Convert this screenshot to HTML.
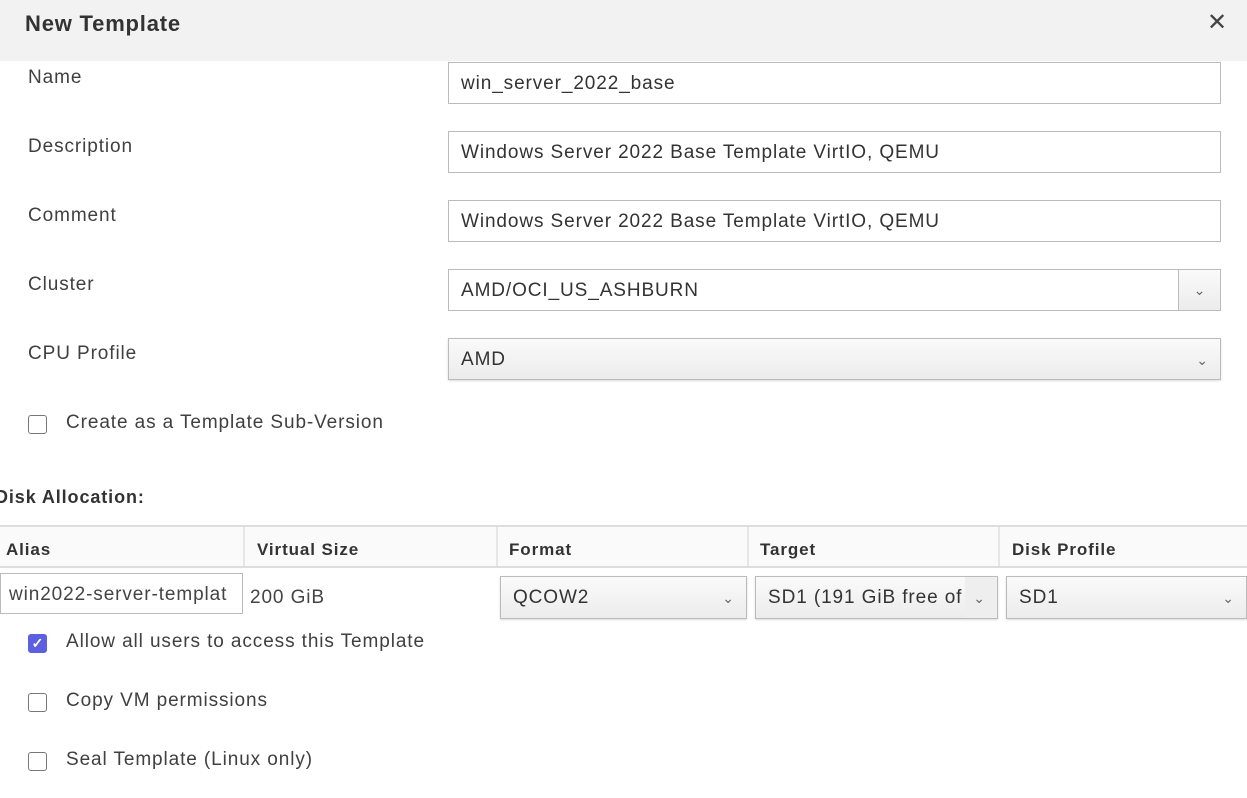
<!DOCTYPE html>
<html><head><meta charset="utf-8"><style>
*{box-sizing:border-box;margin:0;padding:0}
body{width:1247px;height:798px;background:#fff;font-family:"Liberation Sans",Arial,sans-serif;color:#363636;position:relative;overflow:hidden;font-size:19px;letter-spacing:0.9px}
.abs{position:absolute}
.hdr{left:0;top:0;width:1247px;height:61px;background:#f2f2f2}
.title{left:25px;top:11px;font-size:22px;font-weight:bold;color:#333;letter-spacing:0.8px}
.x{left:1207px;top:8px;font-size:24px;color:#444}
.lbl{left:28px;font-size:19px;color:#404040}
.inp{left:448px;width:773px;height:42px;border:1px solid #bbb;background:#fff;padding:0 12px;line-height:41px;font-size:19px;color:#333;white-space:nowrap}
.sel{border:1px solid #bbb;background:linear-gradient(#fafafa,#ececec);box-shadow:0 1px 2px rgba(0,0,0,.15);padding:0 12px;line-height:42px;font-size:19px;color:#333}
.chev{position:absolute;right:12px;top:0;font-size:14px;color:#666;letter-spacing:0}
.cb{width:19px;height:19px;border:1.5px solid #777;border-radius:3px;background:#fff}
.cbt{font-size:19px;color:#404040;white-space:nowrap}
.th{top:525px;height:43px;border-top:2px solid #ddd;border-bottom:2px solid #ddd;background:#fafafa}
.thc{top:527px;height:39px;line-height:46px;font-weight:bold;font-size:17px;color:#333;padding-left:6px;border-right:2px solid #e6e6e6;letter-spacing:0.9px}
</style></head><body>
<div class="abs hdr"></div>
<div class="abs title">New Template</div>
<div class="abs x">✕</div>

<div class="abs lbl" style="top:67px">Name</div>
<div class="abs inp" style="top:62px">win_server_2022_base</div>
<div class="abs lbl" style="top:136px">Description</div>
<div class="abs inp" style="top:131px">Windows Server 2022 Base Template VirtIO, QEMU</div>
<div class="abs lbl" style="top:205px">Comment</div>
<div class="abs inp" style="top:200px">Windows Server 2022 Base Template VirtIO, QEMU</div>
<div class="abs lbl" style="top:274px">Cluster</div>
<div class="abs inp" style="top:269px">AMD/OCI_US_ASHBURN</div>
<div class="abs" style="left:1178px;top:269px;width:43px;height:42px;border:1px solid #bbb;background:linear-gradient(#fafafa,#ececec);text-align:center;line-height:40px;font-size:14px;color:#666;letter-spacing:0">⌄</div>
<div class="abs lbl" style="top:343px">CPU Profile</div>
<div class="abs sel" style="left:448px;top:338px;width:773px;height:42px">AMD<span class="chev">⌄</span></div>

<div class="abs cb" style="left:28px;top:415px"></div>
<div class="abs cbt" style="left:66px;top:412px">Create as a Template Sub-Version</div>

<div class="abs" style="left:-5px;top:487px;font-weight:bold;font-size:18px;color:#333">Disk Allocation:</div>

<div class="abs th" style="left:0;width:1247px"></div>
<div class="abs thc" style="left:0;width:245px">Alias</div>
<div class="abs thc" style="left:245px;width:253px;padding-left:12px">Virtual Size</div>
<div class="abs thc" style="left:498px;width:251px;padding-left:11px">Format</div>
<div class="abs thc" style="left:749px;width:251px;padding-left:11px">Target</div>
<div class="abs thc" style="left:1000px;width:247px;padding-left:12px;border-right:none">Disk Profile</div>

<div class="abs" style="left:0;top:573px;width:243px;height:41px;border:1px solid #bbb;padding-left:8px;line-height:41px;font-size:19px;color:#444;white-space:nowrap;overflow:hidden">win2022-server-templat</div>
<div class="abs" style="left:250px;top:587px;font-size:19px;color:#444">200 GiB</div>
<div class="abs sel" style="left:500px;top:576px;width:247px;height:43px">QCOW2<span class="chev">⌄</span></div>
<div class="abs sel" style="left:755px;top:576px;width:243px;height:43px;white-space:nowrap;overflow:hidden;padding-right:30px">SD1 (191 GiB free of<span class="chev" style="background:#eeeeee;padding-left:8px;right:0;padding-right:12px">⌄</span></div>
<div class="abs sel" style="left:1006px;top:576px;width:241px;height:43px">SD1<span class="chev">⌄</span></div>

<div class="abs cb" style="left:28px;top:634px;background:#5b5fe0;border-color:#5b5fe0;color:#fff;font-size:14px;line-height:16px;text-align:center;font-weight:bold;letter-spacing:0">✓</div>
<div class="abs cbt" style="left:66px;top:631px">Allow all users to access this Template</div>
<div class="abs cb" style="left:28px;top:693px"></div>
<div class="abs cbt" style="left:66px;top:690px">Copy VM permissions</div>
<div class="abs cb" style="left:28px;top:752px"></div>
<div class="abs cbt" style="left:66px;top:749px">Seal Template (Linux only)</div>
</body></html>
